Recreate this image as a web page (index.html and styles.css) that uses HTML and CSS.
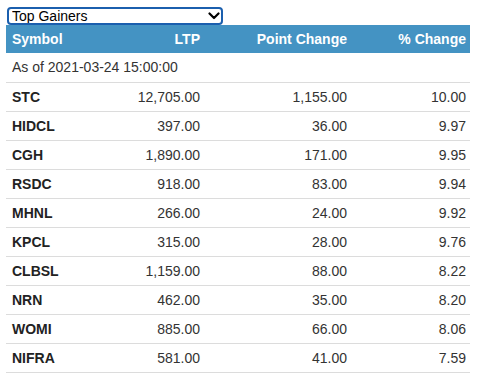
FILE: index.html
```html
<!DOCTYPE html>
<html>
<head>
<meta charset="utf-8">
<link rel="stylesheet" href="styles.css">
</head>
<body>
<div class="wrap">
  <div class="select-box">
    <select class="picker">
      <option>Top Gainers</option>
      <option>Top Losers</option>
    </select>
    <svg class="chev" width="12" height="8" viewBox="0 0 12 8"><path d="M1.5 1.5 L6 6 L10.5 1.5" fill="none" stroke="#000" stroke-width="2.2" stroke-linecap="round" stroke-linejoin="round"/></svg>
  </div>
  <table class="grid">
    <colgroup>
      <col class="c1"><col class="c2"><col class="c3"><col class="c4">
    </colgroup>
    <thead>
      <tr><th class="l">Symbol</th><th>LTP</th><th>Point Change</th><th>% Change</th></tr>
    </thead>
    <tbody>
      <tr><td class="l date" colspan="4">As of 2021-03-24 15:00:00</td></tr>
      <tr><td class="l sym">STC</td><td>12,705.00</td><td>1,155.00</td><td>10.00</td></tr>
      <tr><td class="l sym">HIDCL</td><td>397.00</td><td>36.00</td><td>9.97</td></tr>
      <tr><td class="l sym">CGH</td><td>1,890.00</td><td>171.00</td><td>9.95</td></tr>
      <tr><td class="l sym">RSDC</td><td>918.00</td><td>83.00</td><td>9.94</td></tr>
      <tr><td class="l sym">MHNL</td><td>266.00</td><td>24.00</td><td>9.92</td></tr>
      <tr><td class="l sym">KPCL</td><td>315.00</td><td>28.00</td><td>9.76</td></tr>
      <tr><td class="l sym">CLBSL</td><td>1,159.00</td><td>88.00</td><td>8.22</td></tr>
      <tr><td class="l sym">NRN</td><td>462.00</td><td>35.00</td><td>8.20</td></tr>
      <tr><td class="l sym">WOMI</td><td>885.00</td><td>66.00</td><td>8.06</td></tr>
      <tr><td class="l sym">NIFRA</td><td>581.00</td><td>41.00</td><td>7.59</td></tr>
    </tbody>
  </table>
</div>
</body>
</html>
```
FILE: styles.css
```css
html, body { margin: 0; padding: 0; background: #fff; }
body { font-family: "Liberation Sans", Arial, sans-serif; }
.wrap { padding: 7px 8px 0 6px; width: 464px; }
.select-box { position: relative; width: 216px; height: 18px; margin-left: 1px; }
.picker {
  appearance: none; -webkit-appearance: none;
  width: 216px; height: 18px; box-sizing: border-box;
  border: 2px solid #1b5fae; border-radius: 4px;
  background: #fff; color: #000;
  font-family: "Liberation Sans", Arial, sans-serif; font-size: 14px;
  padding: 0 0 0 3px; margin: 0; line-height: 14px; outline: none;
}
.chev { position: absolute; right: 3px; top: 5px; pointer-events: none; }
.grid { border-collapse: collapse; width: 464px; table-layout: fixed; font-size: 14px; }
.c1 { width: 95px; } .c2 { width: 103px; } .c3 { width: 147px; } .c4 { width: 119px; }
.grid th {
  background: #4493c3; color: #fff; font-weight: bold; height: 28px;
  padding: 0 4px 0 6px; text-align: right; box-sizing: border-box;
}
.grid td {
  height: 29px; box-sizing: border-box; padding: 0 4px 0 6px; text-align: right;
  color: #333; border-bottom: 1px solid #dcdcdc;
}
.grid .l { text-align: left; }
.grid .sym { font-weight: bold; color: #222; }
.grid .date { color: #333; }
```
